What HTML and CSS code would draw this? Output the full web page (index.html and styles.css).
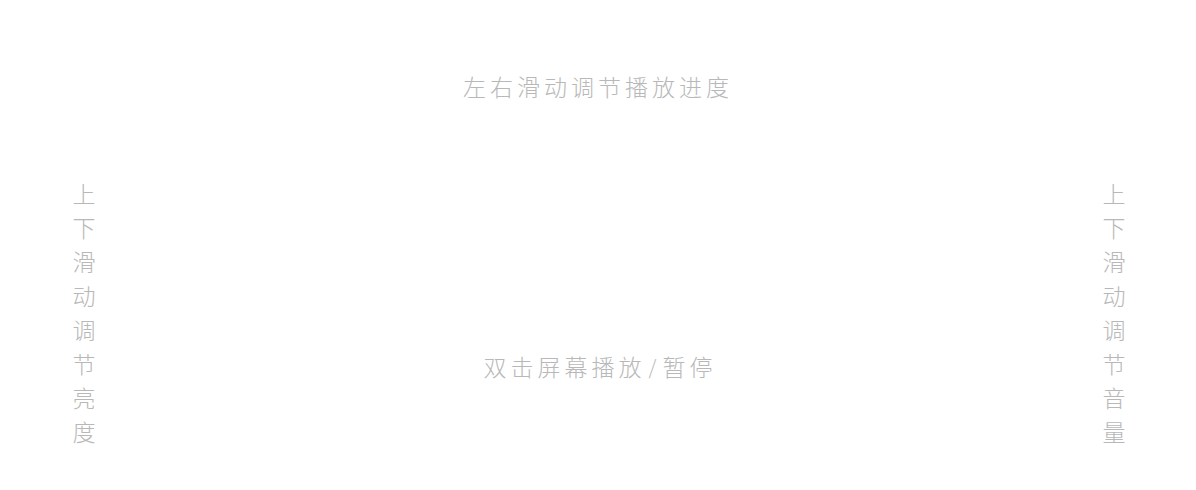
FILE: index.html
```html
<!DOCTYPE html>
<html lang="zh-CN">
<head>
<meta charset="utf-8">
<title>手势提示</title>
<link rel="stylesheet" href="styles.css">
</head>
<body>
<div class="screen">
  <div class="hint hint-top">左右滑动调节播放进度</div>
  <div class="hint hint-side hint-left">上下滑动调节亮度</div>
  <div class="hint hint-center">双击屏幕播放<span class="slash">/</span>暂停</div>
  <div class="hint hint-side hint-right">上下滑动调节音量</div>
</div>
</body>
</html>
```
FILE: styles.css
```css
html, body {
  margin: 0;
  padding: 0;
  background: #ffffff;
}
.screen {
  width: 1196px;
  height: 490px;
  display: grid;
  grid-template-columns: 168px 1fr 164px;
  grid-template-rows: 183px 1fr;
  font-family: "Noto Sans CJK SC", "Noto Sans", sans-serif;
  font-weight: 300;
  color: #b8b8b8;
}
.hint {
  font-size: 23px;
}
.hint-top {
  grid-column: 1 / -1;
  grid-row: 1;
  align-self: start;
  margin-top: 71px;
  line-height: 30px;
  text-align: center;
  letter-spacing: 4px;
}
.hint-side {
  grid-row: 2;
  justify-self: center;
  align-self: start;
  writing-mode: vertical-rl;
  text-orientation: upright;
  letter-spacing: 11px;
  line-height: 24px;
}
.hint-left { grid-column: 1; }
.hint-right { grid-column: 3; }
.hint-center {
  grid-column: 2;
  grid-row: 2;
  align-self: start;
  margin-top: 168px;
  line-height: 30px;
  text-align: center;
  letter-spacing: 4px;
}
.slash {
  display: inline-block;
  font-size: 20px;
  letter-spacing: 0;
  margin: 0 6px 0 3px;
  transform: translateY(-1px);
}
```
